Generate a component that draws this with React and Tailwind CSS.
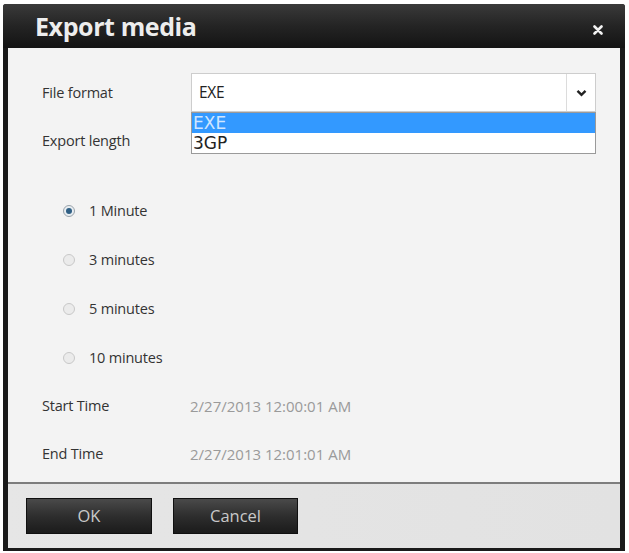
import React from "react";

const font = { fontFamily: '"Open Sans", "Liberation Sans", sans-serif' };

function Radio({ checked, label }) {
  return (
    <div className="flex h-[49px] items-center pl-[21px]">
      <span
        className={
          "flex h-[12px] w-[12px] items-center justify-center rounded-full border " +
          (checked
            ? "border-[#9aa3ab] bg-[#e9eef2]"
            : "border-[#c8c8c8] bg-[#ebebeb]")
        }
      >
        {checked && <span className="h-[6px] w-[6px] rounded-full bg-[#2f5f84]" />}
      </span>
      <span className="ml-[14px] text-[14.5px] tracking-[-0.2px] text-[#333]">{label}</span>
    </div>
  );
}

function Button({ children, width }) {
  return (
    <button
      className={
        "h-[36px] border border-[#101010] bg-gradient-to-b from-[#4a4a4a] via-[#2e2e2e] to-[#1b1b1b] text-[16.5px] text-[#c9c9c9] " +
        width
      }
    >
      {children}
    </button>
  );
}

export default function App() {
  return (
    <div className="h-[553px] w-[629px] bg-white pl-[3px] pt-[4px]" style={font}>
      <div className="flex h-[547px] w-[622px] flex-col rounded-t-[3px] bg-[#1a1a1a] px-[5px] pb-[3px]">
        {/* title bar */}
        <div className="-mx-[5px] flex h-[44px] items-center justify-between rounded-t-[3px] bg-gradient-to-b from-[#3a3a3a] via-[#242424] to-[#141414] pl-[32px] pr-[22px]">
          <span className="mt-[2px] text-[25px] font-bold tracking-[-0.4px] text-[#ededed]">Export media</span>
          <svg className="mt-[8px]" width="10" height="10" viewBox="0 0 10 10">
            <path d="M1.5 1.5 L8.5 8.5 M8.5 1.5 L1.5 8.5" stroke="#f2f2f2" strokeWidth="2.6" strokeLinecap="round" />
          </svg>
        </div>

        {/* form body */}
        <div className="flex-1 bg-[#f3f3f3] pl-[34px] pr-[24px] pt-[25px]">
          <div className="flex h-[39px] items-center">
            <span className="w-[149px] text-[14.5px] tracking-[-0.2px] text-[#333]">File format</span>
            <div className="relative flex h-[39px] flex-1 items-stretch border border-[#cdcdcd] bg-white">
              <span className="flex flex-1 items-center pl-[7px] text-[15.5px] tracking-[-0.3px] text-[#222]">EXE</span>
              <span className="flex w-[29px] items-center justify-center border-l border-[#dcdcdc]">
                <svg width="11" height="8" viewBox="0 0 11 8">
                  <path d="M1.5 1.8 L5.5 5.8 L9.5 1.8" fill="none" stroke="#222" strokeWidth="2.4" />
                </svg>
              </span>
              {/* open option list */}
              <div
                className="absolute left-[-1px] right-[-1px] top-[38px] z-10 border border-[#9a9a9a] bg-white text-[17px] leading-[20px]"
                style={{ fontFamily: '"DejaVu Sans", sans-serif' }}
              >
                <div className="bg-[#3399ff] pl-[1px] text-[#cfe6ff]">EXE</div>
                <div className="pl-[1px] text-[#222]">3GP</div>
              </div>
            </div>
          </div>

          <div className="mt-[19px] h-[20px] text-[14.5px] leading-[20px] tracking-[-0.2px] text-[#333]">Export length</div>

          <div className="mt-[35px]">
            <Radio checked label="1 Minute" />
            <Radio label="3 minutes" />
            <Radio label="5 minutes" />
            <Radio label="10 minutes" />
          </div>

          <div className="flex h-[48px] items-center">
            <span className="w-[148px] text-[14.5px] tracking-[-0.2px] text-[#333]">Start Time</span>
            <span className="text-[15px] text-[#9a9a9a]">2/27/2013 12:00:01 AM</span>
          </div>
          <div className="flex h-[48px] items-center">
            <span className="w-[148px] text-[14.5px] tracking-[-0.2px] text-[#333]">End Time</span>
            <span className="text-[15px] text-[#9a9a9a]">2/27/2013 12:01:01 AM</span>
          </div>
        </div>

        {/* footer */}
        <div className="h-[2px] bg-[#7d7d7d]" />
        <div className="flex h-[64px] gap-[21px] bg-gradient-to-r from-[#e6e6e6] to-[#e2e2e2] pl-[18px] pt-[14px]">
          <Button width="w-[126px]">OK</Button>
          <Button width="w-[125px]">Cancel</Button>
        </div>
      </div>
    </div>
  );
}
